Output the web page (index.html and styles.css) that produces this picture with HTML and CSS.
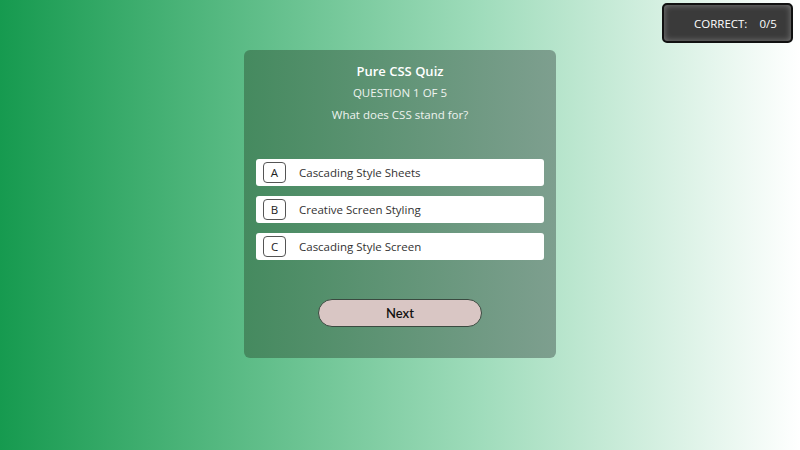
FILE: index.html
```html
<!DOCTYPE html>
<html>
<head>
<meta charset="utf-8">
<link rel="stylesheet" href="styles.css">
</head>
<body>
<div class="score">CORRECT:<span class="score-val">0/5</span></div>
<main class="stage">
  <section class="card">
    <h1 class="title">Pure CSS Quiz</h1>
    <p class="counter">QUESTION 1 OF 5</p>
    <p class="question">What does CSS stand for?</p>
    <ul class="options">
      <li class="option"><span class="letter">A</span><span class="label">Cascading Style Sheets</span></li>
      <li class="option"><span class="letter">B</span><span class="label">Creative Screen Styling</span></li>
      <li class="option"><span class="letter">C</span><span class="label">Cascading Style Screen</span></li>
    </ul>
    <div class="actions"><button class="next">Next</button></div>
  </section>
</main>
</body>
</html>
```
FILE: styles.css
```css
html, body {
  margin: 0;
  height: 100%;
}
body {
  background: linear-gradient(to right, #169a4f 0%, #9fdcbb 60%, #ffffff 100%);
  font-family: "Open Sans", "DejaVu Sans", sans-serif;
  overflow: hidden;
}
.score {
  position: absolute;
  top: 3px;
  right: 7px;
  width: 131px;
  height: 40px;
  box-sizing: border-box;
  border: 2px solid #111;
  border-radius: 5px;
  background: #3a3a3a;
  box-shadow: inset 0 0 6px rgba(255,255,255,0.35);
  color: #fff;
  font-size: 11.5px;
  font-weight: 500;
  display: flex;
  align-items: center;
  padding-left: 30px;
}
.score-val {
  margin-left: 12px;
}
.stage {
  display: flex;
  justify-content: center;
  padding-top: 50px;
}
.card {
  width: 312px;
  height: 308px;
  box-sizing: border-box;
  border-radius: 6px;
  background: linear-gradient(to right, #458a5f, #7e9f8f);
  padding: 12px 12px 0;
  color: #fff;
  text-align: center;
}
.title {
  margin: 0;
  font-size: 13px;
  font-weight: 600;
  line-height: 18px;
}
.counter {
  margin: 4px 0 0;
  font-size: 11.5px;
  line-height: 18px;
  color: #eef3ef;
}
.question {
  margin: 4px 0 0;
  font-size: 11.5px;
  line-height: 18px;
  color: #eef3ef;
}
.options {
  list-style: none;
  margin: 35px 0 0;
  padding: 0;
  display: flex;
  flex-direction: column;
  gap: 10px;
}
.option {
  height: 27px;
  background: #fff;
  border-radius: 3px;
  display: flex;
  align-items: center;
  padding-left: 7px;
  color: #333;
  font-size: 11.5px;
  text-align: left;
}
.letter {
  width: 23px;
  height: 21px;
  box-sizing: border-box;
  border: 1px solid #555;
  border-radius: 4px;
  display: flex;
  align-items: center;
  justify-content: center;
  font-size: 11.5px;
  color: #222;
}
.label {
  margin-left: 13px;
}
.actions {
  display: flex;
  justify-content: center;
  margin-top: 39px;
}
.next {
  width: 164px;
  height: 28px;
  border-radius: 14px;
  border: 1px solid #3a4a40;
  background: #d9c6c4;
  color: #111;
  font-family: "Lato", sans-serif;
  font-size: 13px;
  font-weight: 600;
  padding: 0;
}
```
